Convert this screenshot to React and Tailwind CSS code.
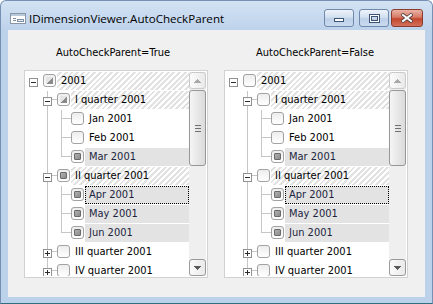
import React from "react";

const LEFT = ["ind", "ind", "off", "off", "on", "on", "on", "on", "on", "off", "off"];
const RIGHT = ["off", "off", "off", "off", "on", "off", "on", "on", "on", "off", "off"];

const ROWS = [
  { level: 0, text: "2001", exp: "minus", bg: "hatch", slots: [] },
  { level: 1, text: "I quarter 2001", exp: "minus", bg: "hatch", slots: ["tee"] },
  { level: 2, text: "Jan 2001", bg: "none", slots: ["pass", "tee"] },
  { level: 2, text: "Feb 2001", bg: "none", slots: ["pass", "tee"] },
  { level: 2, text: "Mar 2001", bg: "sel", slots: ["pass", "end"] },
  { level: 1, text: "II quarter 2001", exp: "minus", bg: "hatch", slots: ["tee"] },
  { level: 2, text: "Apr 2001", bg: "sel", focus: true, slots: ["pass", "tee"] },
  { level: 2, text: "May 2001", bg: "sel", slots: ["pass", "tee"] },
  { level: 2, text: "Jun 2001", bg: "sel", slots: ["pass", "end"] },
  { level: 1, text: "III quarter 2001", exp: "plus", bg: "none", slots: ["tee"] },
  { level: 1, text: "IV quarter 2001", exp: "plus", bg: "none", slots: ["end"] },
];

function Connector({ type }) {
  return (
    <svg className="absolute inset-0" width="14" height="19" shapeRendering="crispEdges">
      {type !== "none" && (
        <line x1="4.5" y1="0" x2="4.5" y2={type === "end" ? 8.5 : 19} stroke="#c6c6c6" />
      )}
      {(type === "tee" || type === "end") && (
        <line x1="4.5" y1="8.5" x2="14" y2="8.5" stroke="#c6c6c6" />
      )}
    </svg>
  );
}

function Expander({ kind }) {
  return (
    <div className="relative mt-[6px] flex h-[9px] w-[9px] items-center justify-center border border-[#919191] bg-white">
      <svg width="7" height="7" shapeRendering="crispEdges">
        <line x1="1" y1="3.5" x2="6" y2="3.5" stroke="#2b2b2b" />
        {kind === "plus" && <line x1="3.5" y1="1" x2="3.5" y2="6" stroke="#2b2b2b" />}
      </svg>
    </div>
  );
}

function Check({ state }) {
  return (
    <div className="mt-[2px] flex h-[13px] w-[13px] shrink-0 items-center justify-center rounded-[3px] border border-[#a2a2a2] bg-[linear-gradient(#ededed,#ffffff)]">
      {state === "on" && (
        <div className="h-[7px] w-[7px] rounded-[1px] border border-[#6a6a6a] bg-[linear-gradient(135deg,#b0b0b0,#8c8c8c)]" />
      )}
      {state === "ind" && (
        <div className="h-[7px] w-[7px] bg-[linear-gradient(135deg,#e4e4e4_50%,#8a8a8a_50%)]" />
      )}
    </div>
  );
}

function Row({ row, state }) {
  let bg = "";
  if (row.bg === "hatch")
    bg = "bg-[repeating-linear-gradient(135deg,#ffffff_0px,#ffffff_2px,#e2e2e2_2px,#e2e2e2_4px)] text-black";
  if (row.bg === "sel") bg = "bg-[#e3e3e3] text-[#1c2540]";
  if (row.bg === "none") bg = "text-black";

  return (
    <div className="flex h-[19px] shrink-0">
      <div className="w-[3px] shrink-0" />
      {Array.from({ length: row.level + 1 }).map((_, k) => (
        <div key={k} className="relative h-[19px] w-[14px] shrink-0">
          {k > 0 && <Connector type={row.slots[k - 1]} />}
          {k === row.level && row.exp && <Expander kind={row.exp} />}
        </div>
      ))}
      <Check state={state} />
      <div
        className={`ml-[1px] h-[18px] flex-1 whitespace-nowrap pl-[4px] text-[11px] leading-[18px] ${bg} ${
          row.focus ? "outline-1 -outline-offset-1 outline-dotted outline-black" : ""
        }`}
      >
        {row.text}
      </div>
    </div>
  );
}

function ScrollButton({ dir, dark }) {
  return (
    <div
      className={`flex h-[17px] w-[17px] shrink-0 items-center justify-center rounded-[3px] border bg-[linear-gradient(90deg,#fbfbfb,#e9e9e9)] ${
        dark ? "border-[#9a9a9a]" : "border-[#cacaca]"
      }`}
    >
      <svg width="7" height="4" shapeRendering="crispEdges">
        {dir === "up" ? (
          <polygon points="0,4 7,4 3.5,0" fill={dark ? "#5a5a5a" : "#a8a8a8"} />
        ) : (
          <polygon points="0,0 7,0 3.5,4" fill={dark ? "#5a5a5a" : "#a8a8a8"} />
        )}
      </svg>
    </div>
  );
}

function Tree({ states }) {
  return (
    <div className="flex h-[208px] w-[184px] border border-[#d2d2d2] bg-white p-px">
      <div className="flex flex-1 flex-col overflow-hidden">
        {ROWS.map((r, i) => (
          <Row key={i} row={r} state={states[i]} />
        ))}
      </div>
      <div className="flex w-[17px] flex-col bg-[#efefef]">
        <ScrollButton dir="up" />
        <div className="mt-[1px] flex h-[76px] w-[17px] flex-col items-center justify-center gap-[2px] rounded-[3px] border border-[#979797] bg-[linear-gradient(90deg,#f5f5f5,#dadada)]">
          <div className="h-px w-[6px] bg-[#6f6f6f]" />
          <div className="h-px w-[6px] bg-[#6f6f6f]" />
          <div className="h-px w-[6px] bg-[#6f6f6f]" />
        </div>
        <div className="flex-1" />
        <ScrollButton dir="down" dark />
      </div>
    </div>
  );
}

function Column({ label, states }) {
  return (
    <div className="flex flex-col pt-[16px]">
      <div className="h-[14px] pl-[32px] text-[11px] leading-[14px] text-black">{label}</div>
      <div className="mt-[10px]">
        <Tree states={states} />
      </div>
    </div>
  );
}

function WinButton({ kind }) {
  if (kind === "close") {
    return (
      <div className="flex h-[18px] w-[32px] items-center justify-center rounded-[3px] border border-[#8b3b2e] bg-[linear-gradient(#eab3a6,#d77a66_45%,#c2472f_55%,#d4705a)]">
        <svg width="12" height="10">
          <path d="M2 2 L10 8 M10 2 L2 8" stroke="#4d3a3a" strokeWidth="3.6" strokeLinecap="square" />
          <path d="M2 2 L10 8 M10 2 L2 8" stroke="#ffffff" strokeWidth="2" strokeLinecap="square" />
        </svg>
      </div>
    );
  }
  return (
    <div className="flex h-[18px] w-[30px] items-center justify-center rounded-[3px] border border-[#6f88aa] bg-[linear-gradient(#eef3fa,#d2e0f0_45%,#bdd0e8_55%,#cadbf0)]">
      {kind === "min" ? (
        <svg width="10" height="10" shapeRendering="crispEdges">
          <rect x="0.5" y="5.5" width="9" height="3" fill="#ffffff" stroke="#3d5372" />
        </svg>
      ) : (
        <svg width="11" height="9" shapeRendering="crispEdges">
          <rect x="0.5" y="0.5" width="10" height="8" fill="none" stroke="#3d5372" />
          <rect x="1.5" y="1.5" width="8" height="6" fill="none" stroke="#ffffff" />
          <rect x="2.5" y="2.5" width="6" height="4" fill="none" stroke="#3d5372" />
        </svg>
      )}
    </div>
  );
}

export default function App() {
  return (
    <div className="h-[304px] w-[433px] bg-white font-['DejaVu_Sans_Condensed','Liberation_Sans',sans-serif]">
      <div className="flex h-[304px] w-[433px] flex-col rounded-t-[6px] border border-[#7590b2] border-b-[#2f6f80] bg-[linear-gradient(#d3e2f3,#bcd2eb_30px,#bcd2eb)]">
        <div className="flex h-[29px] shrink-0 items-start pl-[9px] pr-[9px]">
          <svg className="mt-[12px]" width="16" height="11" shapeRendering="crispEdges">
            <rect x="0.5" y="0.5" width="15" height="10" fill="#ffffff" stroke="#8a96a6" />
            <rect x="1" y="1" width="14" height="2" fill="#b9c9dc" />
            <line x1="3" y1="5.5" x2="6" y2="5.5" stroke="#7d8fa6" />
            <line x1="3" y1="7.5" x2="6" y2="7.5" stroke="#7d8fa6" />
            <rect x="7.5" y="6.5" width="6" height="2" fill="#e6ecf4" stroke="#7d8fa6" />
          </svg>
          <div className="ml-[3px] mt-[10px] font-['Open_Sans',sans-serif] text-[11.6px] leading-[15px] text-black">
            IDimensionViewer.AutoCheckParent
          </div>
          <div className="flex-1" />
          <div className="mt-[8px] flex gap-[2px]">
            <WinButton kind="min" />
            <div className="w-px" />
            <WinButton kind="max" />
            <WinButton kind="close" />
          </div>
        </div>
        <div className="mx-[7px] flex h-[267px] shrink-0 gap-[16px] bg-[#f0f0f0] pl-[16px]">
          <Column label="AutoCheckParent=True" states={LEFT} />
          <Column label="AutoCheckParent=False" states={RIGHT} />
        </div>
      </div>
    </div>
  );
}
